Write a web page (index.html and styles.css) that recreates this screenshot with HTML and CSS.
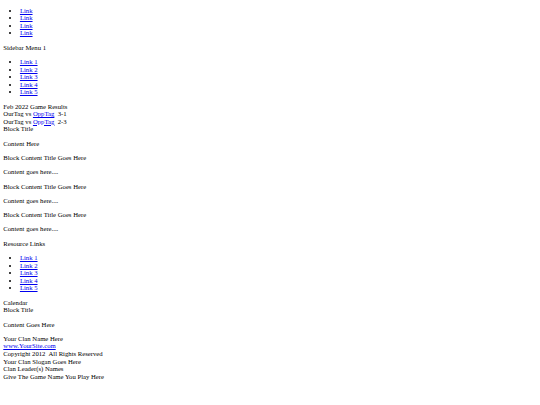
FILE: index.html
```html
<!DOCTYPE html>
<html>
<head>
<meta charset="utf-8">
<link rel="stylesheet" href="styles.css">
</head>
<body class="page">
<ul class="menu">
<li><a href="#">Link</a></li>
<li><a href="#">Link</a></li>
<li><a href="#">Link</a></li>
<li><a href="#">Link</a></li>
</ul>
<div class="line">Sidebar Menu 1</div>
<ul class="menu">
<li><a href="#">Link 1</a></li>
<li><a href="#">Link 2</a></li>
<li><a href="#">Link 3</a></li>
<li><a href="#">Link 4</a></li>
<li><a href="#">Link 5</a></li>
</ul>
<div class="line">Feb 2022 Game Results</div>
<div class="line">OurTag vs <a href="#">OppTag</a>&nbsp; 3-1</div>
<div class="line">OurTag vs <a href="#">OppTag</a>&nbsp; 2-3</div>
<div class="line">Block Title</div>
<p class="para">Content Here</p>
<p class="para">Block Content Title Goes Here</p>
<p class="para">Content goes here....</p>
<p class="para">Block Content Title Goes Here</p>
<p class="para">Content goes here....</p>
<p class="para">Block Content Title Goes Here</p>
<p class="para">Content goes here....</p>
<div class="line">Resource Links</div>
<ul class="menu">
<li><a href="#">Link 1</a></li>
<li><a href="#">Link 2</a></li>
<li><a href="#">Link 3</a></li>
<li><a href="#">Link 4</a></li>
<li><a href="#">Link 5</a></li>
</ul>
<div class="line">Calendar</div>
<div class="line">Block Title</div>
<p class="para">Content Goes Here</p>
<div class="line">Your Clan Name Here</div>
<div class="line"><a href="#">www.YourSite.com</a></div>
<div class="line">Copyright 2012&nbsp; All Rights Reserved</div>
<div class="line">Your Clan Slogan Goes Here</div>
<div class="line">Clan Leader(s) Names</div>
<div class="line">Give The Game Name You Play Here</div>
</body>
</html>
```
FILE: styles.css
```css
html { background: #fff; }
.page {
  margin: 0 3.3px 3.3px;
  font-family: "Liberation Serif", "Times New Roman", serif;
  font-size: 6.7px;
  line-height: 7.6px;
  color: #000;
}
.page a { color: #0000ee; text-decoration: underline; }
.menu {
  margin: 6.7px 0;
  padding-left: 16.6px;
  list-style: disc;
}
.para { margin: 6.7px 0; }
.line { margin: 0; }
```
